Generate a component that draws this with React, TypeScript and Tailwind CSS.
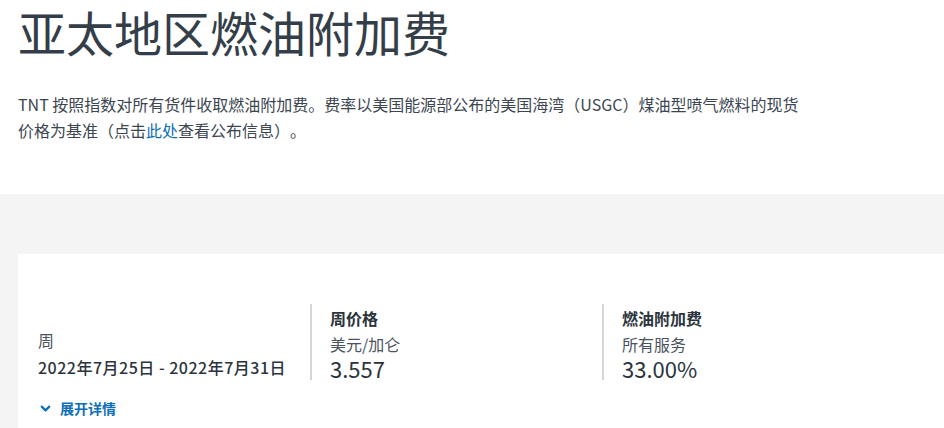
import { ChevronDown } from "lucide-react";

const FONT = "font-['Noto_Sans_CJK_SC','Noto_Sans',sans-serif]";

interface Stat {
  title: string;
  unit: string;
  value: string;
}

const STATS: Stat[] = [
  { title: "周价格", unit: "美元/加仑", value: "3.557" },
  { title: "燃油附加费", unit: "所有服务", value: "33.00%" },
];

export default function App() {
  return (
    <div className={`${FONT} w-[944px] h-[428px] overflow-hidden bg-white text-[#333e48] [text-spacing-trim:space-all]`}>
      {/* Header */}
      <div className="px-[18px] h-[194px]">
        <h1 className="text-[48px] leading-[62px] font-normal">亚太地区燃油附加费</h1>
        <p className="mt-[29px] text-[16px] leading-[26px] max-w-[790px] text-[#3c4650]">
          TNT 按照指数对所有货件收取燃油附加费。费率以美国能源部公布的美国海湾（USGC）煤油型喷气燃料的现货价格为基准（点击
          <a className="text-[#0b6fb8]">此处</a>
          查看公布信息）。
        </p>
      </div>

      {/* Gray band + card */}
      <div className="bg-[#f4f4f4] pt-[60px] pl-[18px] h-[234px]">
        <div className="bg-white h-full pt-[50px] px-[20px]">
          <div className="flex items-stretch h-[76px]">
            <div className="w-[272px] flex flex-col justify-end pb-[1px]">
              <div className="text-[16px] leading-[24px] text-[#4a545d]">周</div>
              <div className="mt-[3px] text-[16px] leading-[24px] font-medium tracking-[0.5px] text-[#2b343c]">
                2022年7月25日 - 2022年7月31日
              </div>
            </div>
            {STATS.map((s) => (
              <div key={s.title} className="w-[292px] border-l-2 border-[#d6d6d6] pl-[18px] pt-[3px]">
                <div className="text-[16px] leading-[22px] font-bold text-[#2b343c]">{s.title}</div>
                <div className="mt-[3px] text-[16px] leading-[24px] text-[#4a545d]">{s.unit}</div>
                <div className="text-[22px] leading-[24px] text-[#2b343c]">{s.value}</div>
              </div>
            ))}
          </div>
          <button
            type="button"
            className="mt-[18px] flex items-center gap-[7px] text-[14px] leading-[20px] font-bold text-[#0b6fb8]"
          >
            <ChevronDown size={15} strokeWidth={3.5} />
            展开详情
          </button>
        </div>
      </div>
    </div>
  );
}
